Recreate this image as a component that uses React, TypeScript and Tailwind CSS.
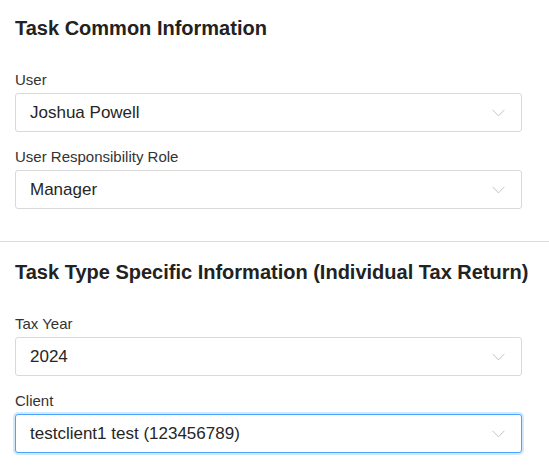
import React from "react";

type Field = { label: string; value: string; focused?: boolean };

const Chevron = () => (
  <svg width="13" height="8" viewBox="0 0 13 8" fill="none" className="shrink-0">
    <path d="M0.6 0.8 L6.5 6.9 L12.4 0.8" stroke="#c4c4c4" strokeWidth="1" />
  </svg>
);

const SelectField = ({ label, value, focused }: Field) => (
  <div>
    <div className="text-[15px] leading-[20px] text-[#333] mb-[3px]">{label}</div>
    <div
      className={
        focused
          ? "h-[39px] w-[507px] flex items-center justify-between pl-[14px] pr-[16px] rounded-[3px] bg-white border border-[#4aa3ff] shadow-[0_0_0_2px_rgba(24,144,255,0.2)]"
          : "h-[39px] w-[507px] flex items-center justify-between pl-[14px] pr-[16px] rounded-[3px] bg-white border border-[#d9d9d9]"
      }
    >
      <span className="text-[17px] text-[#262626] whitespace-nowrap">{value}</span>
      <Chevron />
    </div>
  </div>
);

const Section = ({ title, fields, className }: { title: string; fields: Field[]; className: string }) => (
  <section className={className}>
    <h2 className="text-[20px] leading-[24px] font-bold text-[#222] mb-[30px] whitespace-nowrap">
      {title}
    </h2>
    <div className="flex flex-col gap-[15px]">
      {fields.map((f) => (
        <SelectField key={f.label} {...f} />
      ))}
    </div>
  </section>
);

export default function App() {
  return (
    <div className="w-[549px] h-[472px] bg-white overflow-hidden font-['Liberation_Sans',Arial,sans-serif]">
      <Section
        title="Task Common Information"
        className="pl-[15px] pt-[16px] pb-[32px] border-b border-[#dcdcdc]"
        fields={[
          { label: "User", value: "Joshua Powell" },
          { label: "User Responsibility Role", value: "Manager" },
        ]}
      />
      <Section
        title="Task Type Specific Information (Individual Tax Return)"
        className="pl-[15px] pt-[18px]"
        fields={[
          { label: "Tax Year", value: "2024" },
          { label: "Client", value: "testclient1 test (123456789)", focused: true },
        ]}
      />
    </div>
  );
}
